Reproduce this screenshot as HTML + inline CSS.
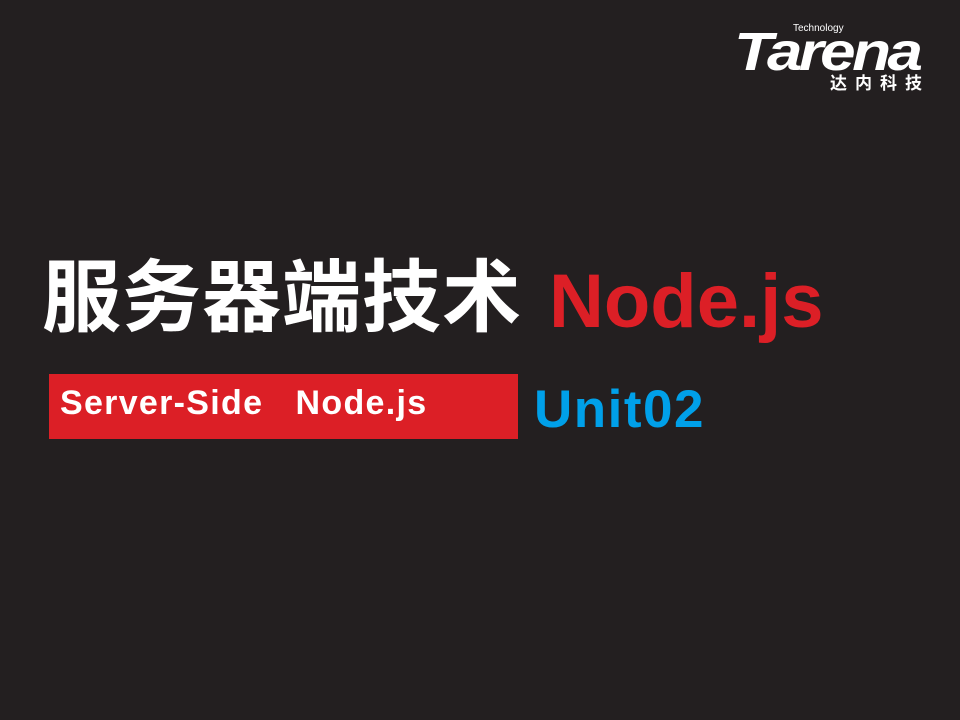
<!DOCTYPE html>
<html><head><meta charset="utf-8"><style>
body{margin:0;width:960px;height:720px;background:#231f20;position:relative;overflow:hidden;font-family:"Liberation Sans","Noto Sans CJK SC",sans-serif}
.a{position:absolute;white-space:nowrap}
</style></head><body>
<div class="a" style="left:42px;top:248px;font-size:79px;font-weight:bold;color:#fff;line-height:100px;letter-spacing:1px">服务器端技术</div>
<div class="a" style="left:549px;top:252px;font-size:76px;font-weight:bold;color:#dc1f26;line-height:100px">Node.js</div>
<div class="a" style="left:49px;top:374px;width:469px;height:65px;background:#dc1f26"></div>
<div class="a" style="left:60px;top:381px;font-size:34px;font-weight:bold;color:#fff;line-height:44px;letter-spacing:1.3px">Server-Side&nbsp;&nbsp;&nbsp;Node.js</div>
<div class="a" style="left:534px;top:380px;font-size:53px;font-weight:bold;color:#00a0e9;line-height:60px;letter-spacing:1.5px">Unit02</div>
<div class="a" style="left:793px;top:23px;font-size:10px;color:#fff">Technology</div>
<div class="a" style="left:734px;top:22px;font-size:54px;font-weight:bold;font-style:italic;color:#fff;letter-spacing:-3px;line-height:60px;transform:scaleX(1.18);transform-origin:left">Tarena</div>
<div class="a" style="left:830px;top:74px;font-size:17px;font-weight:bold;color:#fff;letter-spacing:8px;line-height:20px">达内科技</div>
</body></html>
